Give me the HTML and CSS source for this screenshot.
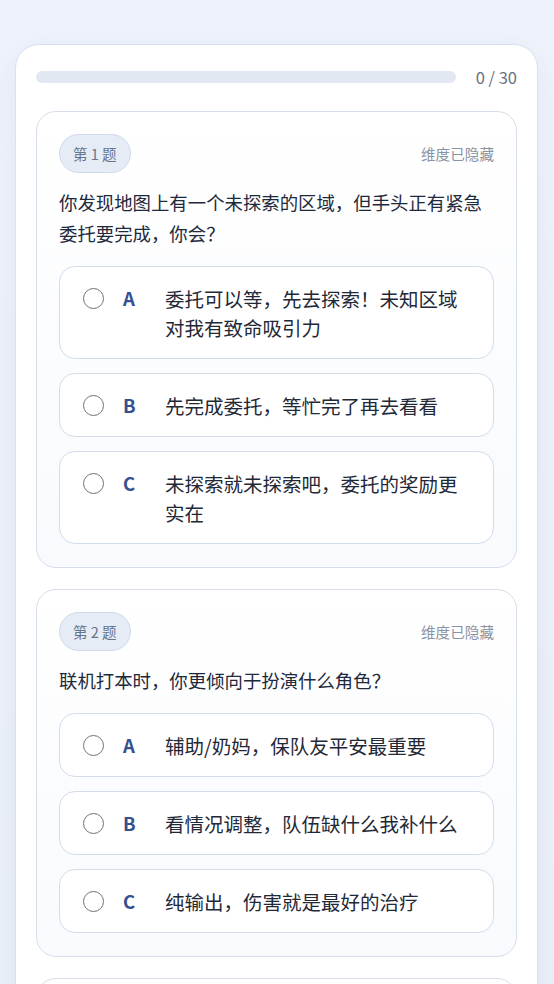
FILE: index.html
```html
<!DOCTYPE html>
<html lang="zh-CN">
<head>
<meta charset="utf-8">
<title>测试</title>
<link rel="stylesheet" href="styles.css">
</head>
<body>
<div class="page">
  <main class="panel">
    <div class="progress">
      <div class="bar"></div>
      <span class="count">0 / 30</span>
    </div>

    <section class="card">
      <div class="card-head">
        <span class="badge">第 1 题</span>
        <span class="dim">维度已隐藏</span>
      </div>
      <p class="question">你发现地图上有一个未探索的区域，但手头正有紧急委托要完成，你会？</p>
      <div class="options">
        <label class="option"><span class="radio"></span><span class="letter">A</span><span class="text">委托可以等，先去探索！未知区域对我有致命吸引力</span></label>
        <label class="option"><span class="radio"></span><span class="letter">B</span><span class="text">先完成委托，等忙完了再去看看</span></label>
        <label class="option"><span class="radio"></span><span class="letter">C</span><span class="text">未探索就未探索吧，委托的奖励更实在</span></label>
      </div>
    </section>

    <section class="card">
      <div class="card-head">
        <span class="badge">第 2 题</span>
        <span class="dim">维度已隐藏</span>
      </div>
      <p class="question">联机打本时，你更倾向于扮演什么角色？</p>
      <div class="options">
        <label class="option"><span class="radio"></span><span class="letter">A</span><span class="text">辅助/奶妈，保队友平安最重要</span></label>
        <label class="option"><span class="radio"></span><span class="letter">B</span><span class="text">看情况调整，队伍缺什么我补什么</span></label>
        <label class="option"><span class="radio"></span><span class="letter">C</span><span class="text">纯输出，伤害就是最好的治疗</span></label>
      </div>
    </section>

    <section class="card card-next"></section>
  </main>
</div>
</body>
</html>
```

FILE: styles.css
```css
* { box-sizing: border-box; }

html, body {
  margin: 0;
  padding: 0;
}

body {
  min-height: 100vh;
  background: linear-gradient(180deg, #eef2fb 0%, #eaeff8 100%);
  font-family: "Noto Sans CJK SC", "Noto Sans", sans-serif;
  color: #1f2937;
}

.page {
  padding: 44px 16px 0 15px;
}

.panel {
  background: #ffffff;
  border: 1px solid #d9e1ee;
  border-radius: 24px;
  padding: 20px 20px 24px;
  box-shadow: 0 8px 28px rgba(40, 60, 110, 0.06);
}

.progress {
  display: flex;
  align-items: center;
  gap: 20px;
  height: 24px;
  margin-bottom: 22px;
}

.bar {
  flex: 1;
  height: 12px;
  border-radius: 6px;
  background: #e2e8f2;
}

.count {
  font-size: 16.5px;
  line-height: 24px;
  color: #6b7280;
  white-space: nowrap;
}

.card {
  border: 1px solid #d6deeb;
  border-radius: 20px;
  padding: 22px 22px 23px;
  background: linear-gradient(180deg, #ffffff 0%, #f8fafd 100%);
}

.card + .card {
  margin-top: 21px;
}

.card-next {
  height: 120px;
}

.card-head {
  display: flex;
  justify-content: space-between;
  align-items: center;
}

.badge {
  display: inline-block;
  padding: 8px 13px;
  line-height: 21px;
  font-size: 14.5px;
  color: #64748b;
  background: #e6ecf6;
  border: 1px solid #cfd9ea;
  border-radius: 999px;
}

.dim {
  font-size: 14.6px;
  color: #8a93a3;
}

.question {
  margin: 13.5px 0 17.5px;
  font-size: 18.4px;
  line-height: 31px;
  color: #1e293b;
}

.options {
  display: flex;
  flex-direction: column;
  gap: 14px;
}

.option {
  display: flex;
  align-items: flex-start;
  padding: 16.5px 24px 16.5px 23px;
  background: #ffffff;
  border: 1px solid #d3dcec;
  border-radius: 16px;
}

.radio {
  flex: none;
  width: 21px;
  height: 21px;
  margin-top: 4px;
  border: 1.6px solid #727272;
  border-radius: 50%;
  background: #fff;
}

.letter {
  flex: none;
  width: 24px;
  margin-left: 19px;
  font-size: 18.5px;
  font-weight: 700;
  line-height: 29px;
  color: #34508f;
}

.text {
  margin-left: 18px;
  font-size: 19.5px;
  line-height: 29px;
  color: #1f2937;
}
```
